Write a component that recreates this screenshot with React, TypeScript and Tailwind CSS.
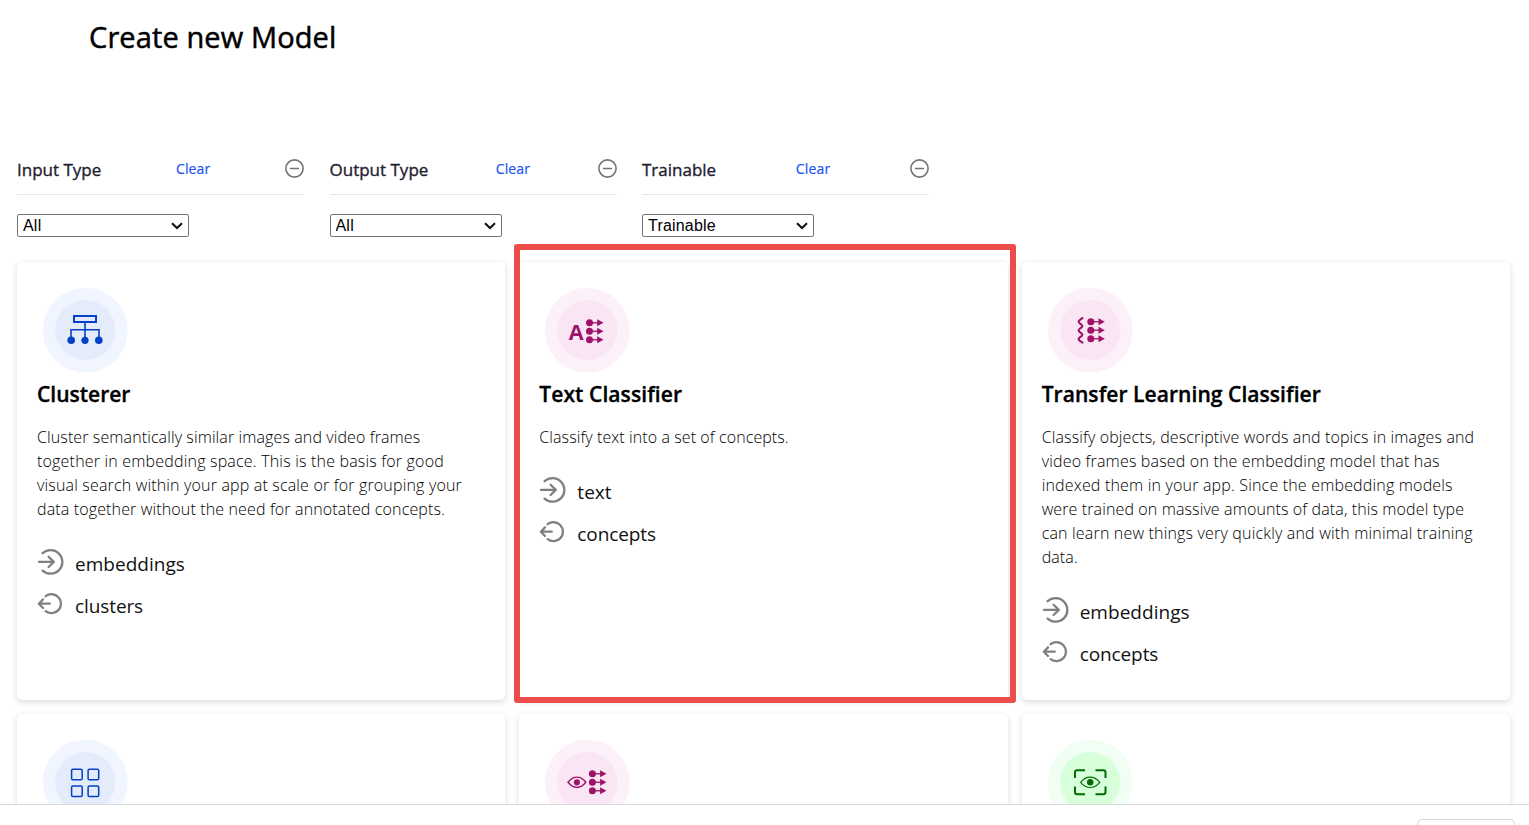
import type { ReactNode } from "react";

const MAGENTA = "#9e1267";
const BLUE = "#0440c8";
const GREEN = "#036b03";

function Arrows({ x, y }: { x: number; y: number }) {
  return (
    <g fill={MAGENTA} stroke={MAGENTA}>
      {[y - 8.5, y, y + 8.5].map((cy) => (
        <g key={cy}>
          <circle cx={x + 3.5} cy={cy} r={3.5} stroke="none" />
          <path d={`M${x + 3} ${cy}H${x + 13}`} strokeWidth={1.3} />
          <path d={`M${x + 11.2} ${cy - 3.5}L${x + 17.5} ${cy}L${x + 11.2} ${cy + 3.5}Z`} stroke="none" />
        </g>
      ))}
    </g>
  );
}

function ClusterIcon() {
  return (
    <g stroke={BLUE} fill="none">
      <rect x={31} y={28} width={22} height={6} strokeWidth={2} />
      <path d="M42 34V50M28 50V41.8H56V50" strokeWidth={1.6} />
      <g fill={BLUE} stroke="none">
        <circle cx={28.2} cy={52.3} r={3.8} />
        <circle cx={42} cy={52.3} r={3.6} />
        <circle cx={55.8} cy={52.3} r={3.8} />
      </g>
    </g>
  );
}

function TextIcon() {
  return (
    <g>
      <text x={23.8} y={51.5} fill={MAGENTA} fontSize={21.5} fontWeight={700} fontFamily="Open Sans, sans-serif">
        A
      </text>
      <Arrows x={41} y={43.3} />
    </g>
  );
}

function TransferIcon() {
  return (
    <g>
      <path
        d="M35.2 29.6C33 31.3 30.6 32.2 30.6 33.8C30.6 35.3 34.4 36.5 34.4 38.1C34.4 39.7 30.6 40.8 30.6 42.4C30.6 44 34.4 45.1 34.4 46.7C34.4 48.3 30.6 49.4 30.6 51C30.6 52.6 33 53.6 35.2 55"
        stroke={MAGENTA}
        strokeWidth={2.1}
        fill="none"
      />
      <Arrows x={39.3} y={42.2} />
    </g>
  );
}

function GridIcon() {
  return (
    <g stroke={BLUE} strokeWidth={1.5} fill="none">
      <rect x={28.6} y={29.2} width={10.6} height={10.6} rx={1.3} />
      <rect x={45.1} y={29.2} width={10.6} height={10.6} rx={1.3} />
      <rect x={28.6} y={46} width={10.6} height={10.6} rx={1.3} />
      <rect x={45.1} y={46} width={10.6} height={10.6} rx={1.3} />
    </g>
  );
}

function EyeArrowsIcon() {
  return (
    <g>
      <path
        d="M23 42.3C28.5 35.4 35.5 35.4 40.8 42.3C35.5 49.2 28.5 49.2 23 42.3Z"
        stroke={MAGENTA}
        strokeWidth={1.4}
        fill="none"
      />
      <circle cx={31.9} cy={42.3} r={3.1} fill={MAGENTA} />
      <Arrows x={43.9} y={42.3} />
    </g>
  );
}

function ScanEyeIcon() {
  return (
    <g stroke={GREEN} fill="none">
      <path
        d="M27 38V32.5Q27 30.3 29.2 30.3H37M47.5 30.3H55.3Q57.5 30.3 57.5 32.5V38M57.5 46.5V52Q57.5 54.2 55.3 54.2H47.5M37 54.2H29.2Q27 54.2 27 52V46.5"
        strokeWidth={2}
      />
      <path d="M32.6 42.3C38.3 35.4 46.1 35.4 51.8 42.3C46.1 49.2 38.3 49.2 32.6 42.3Z" strokeWidth={1.1} />
      <circle cx={42.2} cy={42.3} r={3.2} fill={GREEN} stroke="none" />
    </g>
  );
}

function Badge({ outer, inner, children }: { outer: string; inner: string; children: ReactNode }) {
  return (
    <svg width={85} height={85} viewBox="0 0 85 85" className="ml-1.5 block">
      <circle cx={42.3} cy={42.2} r={42.4} fill={outer} />
      <circle cx={42.3} cy={42} r={30} fill={inner} />
      {children}
    </svg>
  );
}

function InputIcon() {
  return (
    <svg width={28} height={28} viewBox="0 0 28 28" fill="none" stroke="#808080" strokeWidth={2.3} strokeLinecap="round" strokeLinejoin="round">
      <path d="M5.6 5.2A11.8 11.8 0 1 1 5.6 22.6" />
      <path d="M2 13.9H16.4M11.6 8.8L16.8 13.9L11.6 19" />
    </svg>
  );
}

function OutputIcon() {
  return (
    <svg width={28} height={28} viewBox="0 0 28 28" fill="none" stroke="#808080" strokeWidth={2.3} strokeLinecap="round" strokeLinejoin="round">
      <path d="M8.6 6.2A9.5 9.5 0 1 1 8.6 21.2" />
      <path d="M12.8 13.7H2M6 9.4L1.8 13.7L6 18" />
    </svg>
  );
}

function MinusCircle() {
  return (
    <svg width={19} height={19} viewBox="0 0 19 19" fill="none" stroke="#757575" strokeLinecap="round">
      <circle cx={9.5} cy={9.5} r={8.6} strokeWidth={1.6} />
      <path d="M5.6 9.5H13.4" strokeWidth={1.6} />
    </svg>
  );
}

function Filter({ label, value }: { label: string; value: string }) {
  return (
    <div className="w-[287px]">
      <div className="flex h-[49px] items-center justify-between border-b border-[#e6e6e6]">
        <span className="text-[17px] leading-6 text-[#1f2030] [-webkit-text-stroke:0.35px]">{label}</span>
        <span className="pb-0.5 text-sm tracking-[0.15px] text-[#2155f5] [-webkit-text-stroke:0.2px]">Clear</span>
        <span className="pb-[3px]">
          <MinusCircle />
        </span>
      </div>
      <div className="relative mt-[19px] w-[172px]">
        <select
          defaultValue={value}
          className="block h-[23px] w-full appearance-none rounded-[2px] border border-[#767676] bg-white pl-[5px] font-['Liberation_Sans',sans-serif] text-base leading-5 tracking-[0.2px] text-black"
        >
          <option>{value}</option>
        </select>
        <svg width={12} height={8} viewBox="0 0 12 8" className="pointer-events-none absolute top-2 right-1.5" fill="none" stroke="#111" strokeWidth={2.1}>
          <path d="M1 1.2L6 6L11 1.2" />
        </svg>
      </div>
    </div>
  );
}

function Card({
  title,
  titleClass = "",
  badge,
  lines = [],
  input,
  output,
}: {
  title?: string;
  titleClass?: string;
  badge: ReactNode;
  lines?: [string, string][];
  input?: string;
  output?: string;
}) {
  return (
    <section className="h-[438px] rounded-[5px] bg-white px-5 pt-[26px] shadow-[0_2px_6px_rgba(30,40,50,0.17)]">
      {badge}
      {title && (
        <>
          <h2 className={`mt-[5px] text-[21px] leading-8 font-semibold whitespace-nowrap text-black [-webkit-text-stroke:0.35px] ${titleClass}`}>
            {title}
          </h2>
          <p className="mt-[15px] text-base leading-6 font-light text-black">
            {lines.map(([text, tracking]) => (
              <span key={text} className={`block whitespace-nowrap ${tracking}`}>
                {text}
              </span>
            ))}
          </p>
          <ul className="mt-[22px] text-[19px] text-[#111]">
            <li className="flex h-[42px] items-center gap-2.5">
              <span className="-mt-1">
                <InputIcon />
              </span>
              <span className="tracking-[0.03px]">{input}</span>
            </li>
            <li className="flex h-[42px] items-center gap-2.5">
              <span className="-mt-1">
                <OutputIcon />
              </span>
              <span className="tracking-[-0.1px]">{output}</span>
            </li>
          </ul>
        </>
      )}
    </section>
  );
}

export default function App() {
  return (
    <div className="relative flex h-[825px] w-full flex-col overflow-hidden bg-white font-['Open_Sans',sans-serif]">
      <main className="h-[804px] shrink-0 overflow-hidden pl-[17px]">
        <h1 className="pt-[17px] pl-[72px] text-[29px] leading-10 tracking-[0.11px] text-black [-webkit-text-stroke:0.5px]">
          Create new Model
        </h1>
        <div className="mt-[89px] flex gap-[25.5px]">
          <Filter label="Input Type" value="All" />
          <Filter label="Output Type" value="All" />
          <Filter label="Trainable" value="Trainable" />
        </div>
        <div className="mt-[25px] grid w-[1493px] grid-cols-3 gap-[14px]">
          <Card
            title="Clusterer"
            badge={
              <Badge outer="#f0f5ff" inner="#e4ebfb">
                <ClusterIcon />
              </Badge>
            }
            lines={[
              ["Cluster semantically similar images and video frames", "tracking-[0.11px]"],
              ["together in embedding space. This is the basis for good", "tracking-[0.19px]"],
              ["visual search within your app at scale or for grouping your", "tracking-[0.17px]"],
              ["data together without the need for annotated concepts.", "tracking-[0.14px]"],
            ]}
            input="embeddings"
            output="clusters"
          />
          <Card
            title="Text Classifier"
            titleClass="tracking-[0.08px]"
            badge={
              <Badge outer="#fcf0f9" inner="#fae5f5">
                <TextIcon />
              </Badge>
            }
            lines={[["Classify text into a set of concepts.", "tracking-[0.09px]"]]}
            input="text"
            output="concepts"
          />
          <Card
            title="Transfer Learning Classifier"
            titleClass="tracking-[0.06px]"
            badge={
              <Badge outer="#fcf0f9" inner="#fae5f5">
                <TransferIcon />
              </Badge>
            }
            lines={[
              ["Classify objects, descriptive words and topics in images and", "tracking-[0.13px]"],
              ["video frames based on the embedding model that has", "tracking-[0.18px]"],
              ["indexed them in your app. Since the embedding models", "tracking-[0.18px]"],
              ["were trained on massive amounts of data, this model type", "tracking-[0.12px]"],
              ["can learn new things very quickly and with minimal training", "tracking-[0.18px]"],
              ["data.", "tracking-[0.1px]"],
            ]}
            input="embeddings"
            output="concepts"
          />
          <Card
            badge={
              <Badge outer="#f0f5ff" inner="#e4ebfb">
                <GridIcon />
              </Badge>
            }
          />
          <Card
            badge={
              <Badge outer="#fcf0f9" inner="#fae5f5">
                <EyeArrowsIcon />
              </Badge>
            }
          />
          <Card
            badge={
              <Badge outer="#f1fef3" inner="#d6ffda">
                <ScanEyeIcon />
              </Badge>
            }
          />
        </div>
      </main>
      <footer className="flex h-[60px] shrink-0 justify-end border-t border-[#d6d8da] bg-white pt-3.5 pr-3.5">
        <button className="h-9 w-[98px] rounded-[5px] border border-[#d4d6d8] bg-white" />
      </footer>
      <div className="pointer-events-none absolute top-[244px] left-[514px] h-[459px] w-[502px] rounded-[3px] border-[6px] border-[#ec4d4a]" />
    </div>
  );
}
